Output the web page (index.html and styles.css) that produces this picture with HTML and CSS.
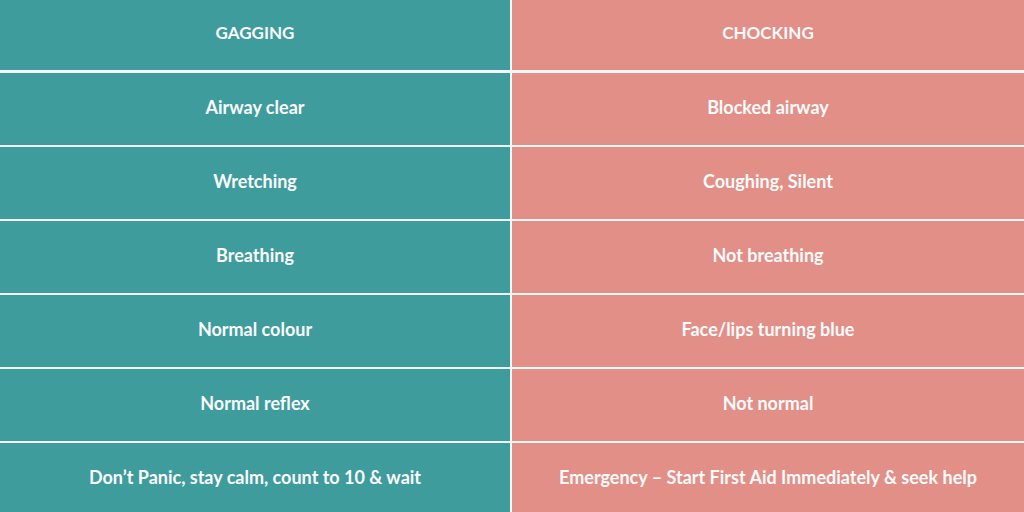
FILE: index.html
```html
<!DOCTYPE html>
<html>
<head>
<meta charset="utf-8">
<link rel="stylesheet" href="styles.css">
</head>
<body>
<div class="table">
  <div class="cell gag head">GAGGING</div>
  <div class="cell choke head">CHOCKING</div>
  <div class="cell gag">Airway clear</div>
  <div class="cell choke">Blocked airway</div>
  <div class="cell gag">Wretching</div>
  <div class="cell choke">Coughing, Silent</div>
  <div class="cell gag">Breathing</div>
  <div class="cell choke">Not breathing</div>
  <div class="cell gag">Normal colour</div>
  <div class="cell choke">Face/lips turning blue</div>
  <div class="cell gag">Normal reflex</div>
  <div class="cell choke">Not normal</div>
  <div class="cell gag last">Don’t Panic, stay calm, count to 10 &amp; wait</div>
  <div class="cell choke last">Emergency – Start First Aid Immediately &amp; seek help</div>
</div>
</body>
</html>
```

FILE: styles.css
```css
html, body {
  margin: 0;
  padding: 0;
  width: 1024px;
  height: 512px;
  overflow: hidden;
}
.table {
  width: 1024px;
  height: 512px;
  display: grid;
  grid-template-columns: 510px 1fr;
  grid-template-rows: 71px repeat(5, 72px) 1fr;
  column-gap: 2px;
  row-gap: 2px;
  background: #f4f8f8;
  font-family: Lato, "Open Sans", sans-serif;
  font-weight: 700;
  font-size: 18px;
  color: #fbfbfb;
}
.cell {
  display: flex;
  align-items: center;
  justify-content: center;
  padding-bottom: 5px;
  box-sizing: border-box;
}
.head {
  font-size: 17px;
  border-bottom: 1px solid #f4f8f8;
  padding-bottom: 6px;
}
.last {
  padding-bottom: 1px;
}
.gag { background: #3f9c9d; }
.choke { background: #e28f88; }
```
